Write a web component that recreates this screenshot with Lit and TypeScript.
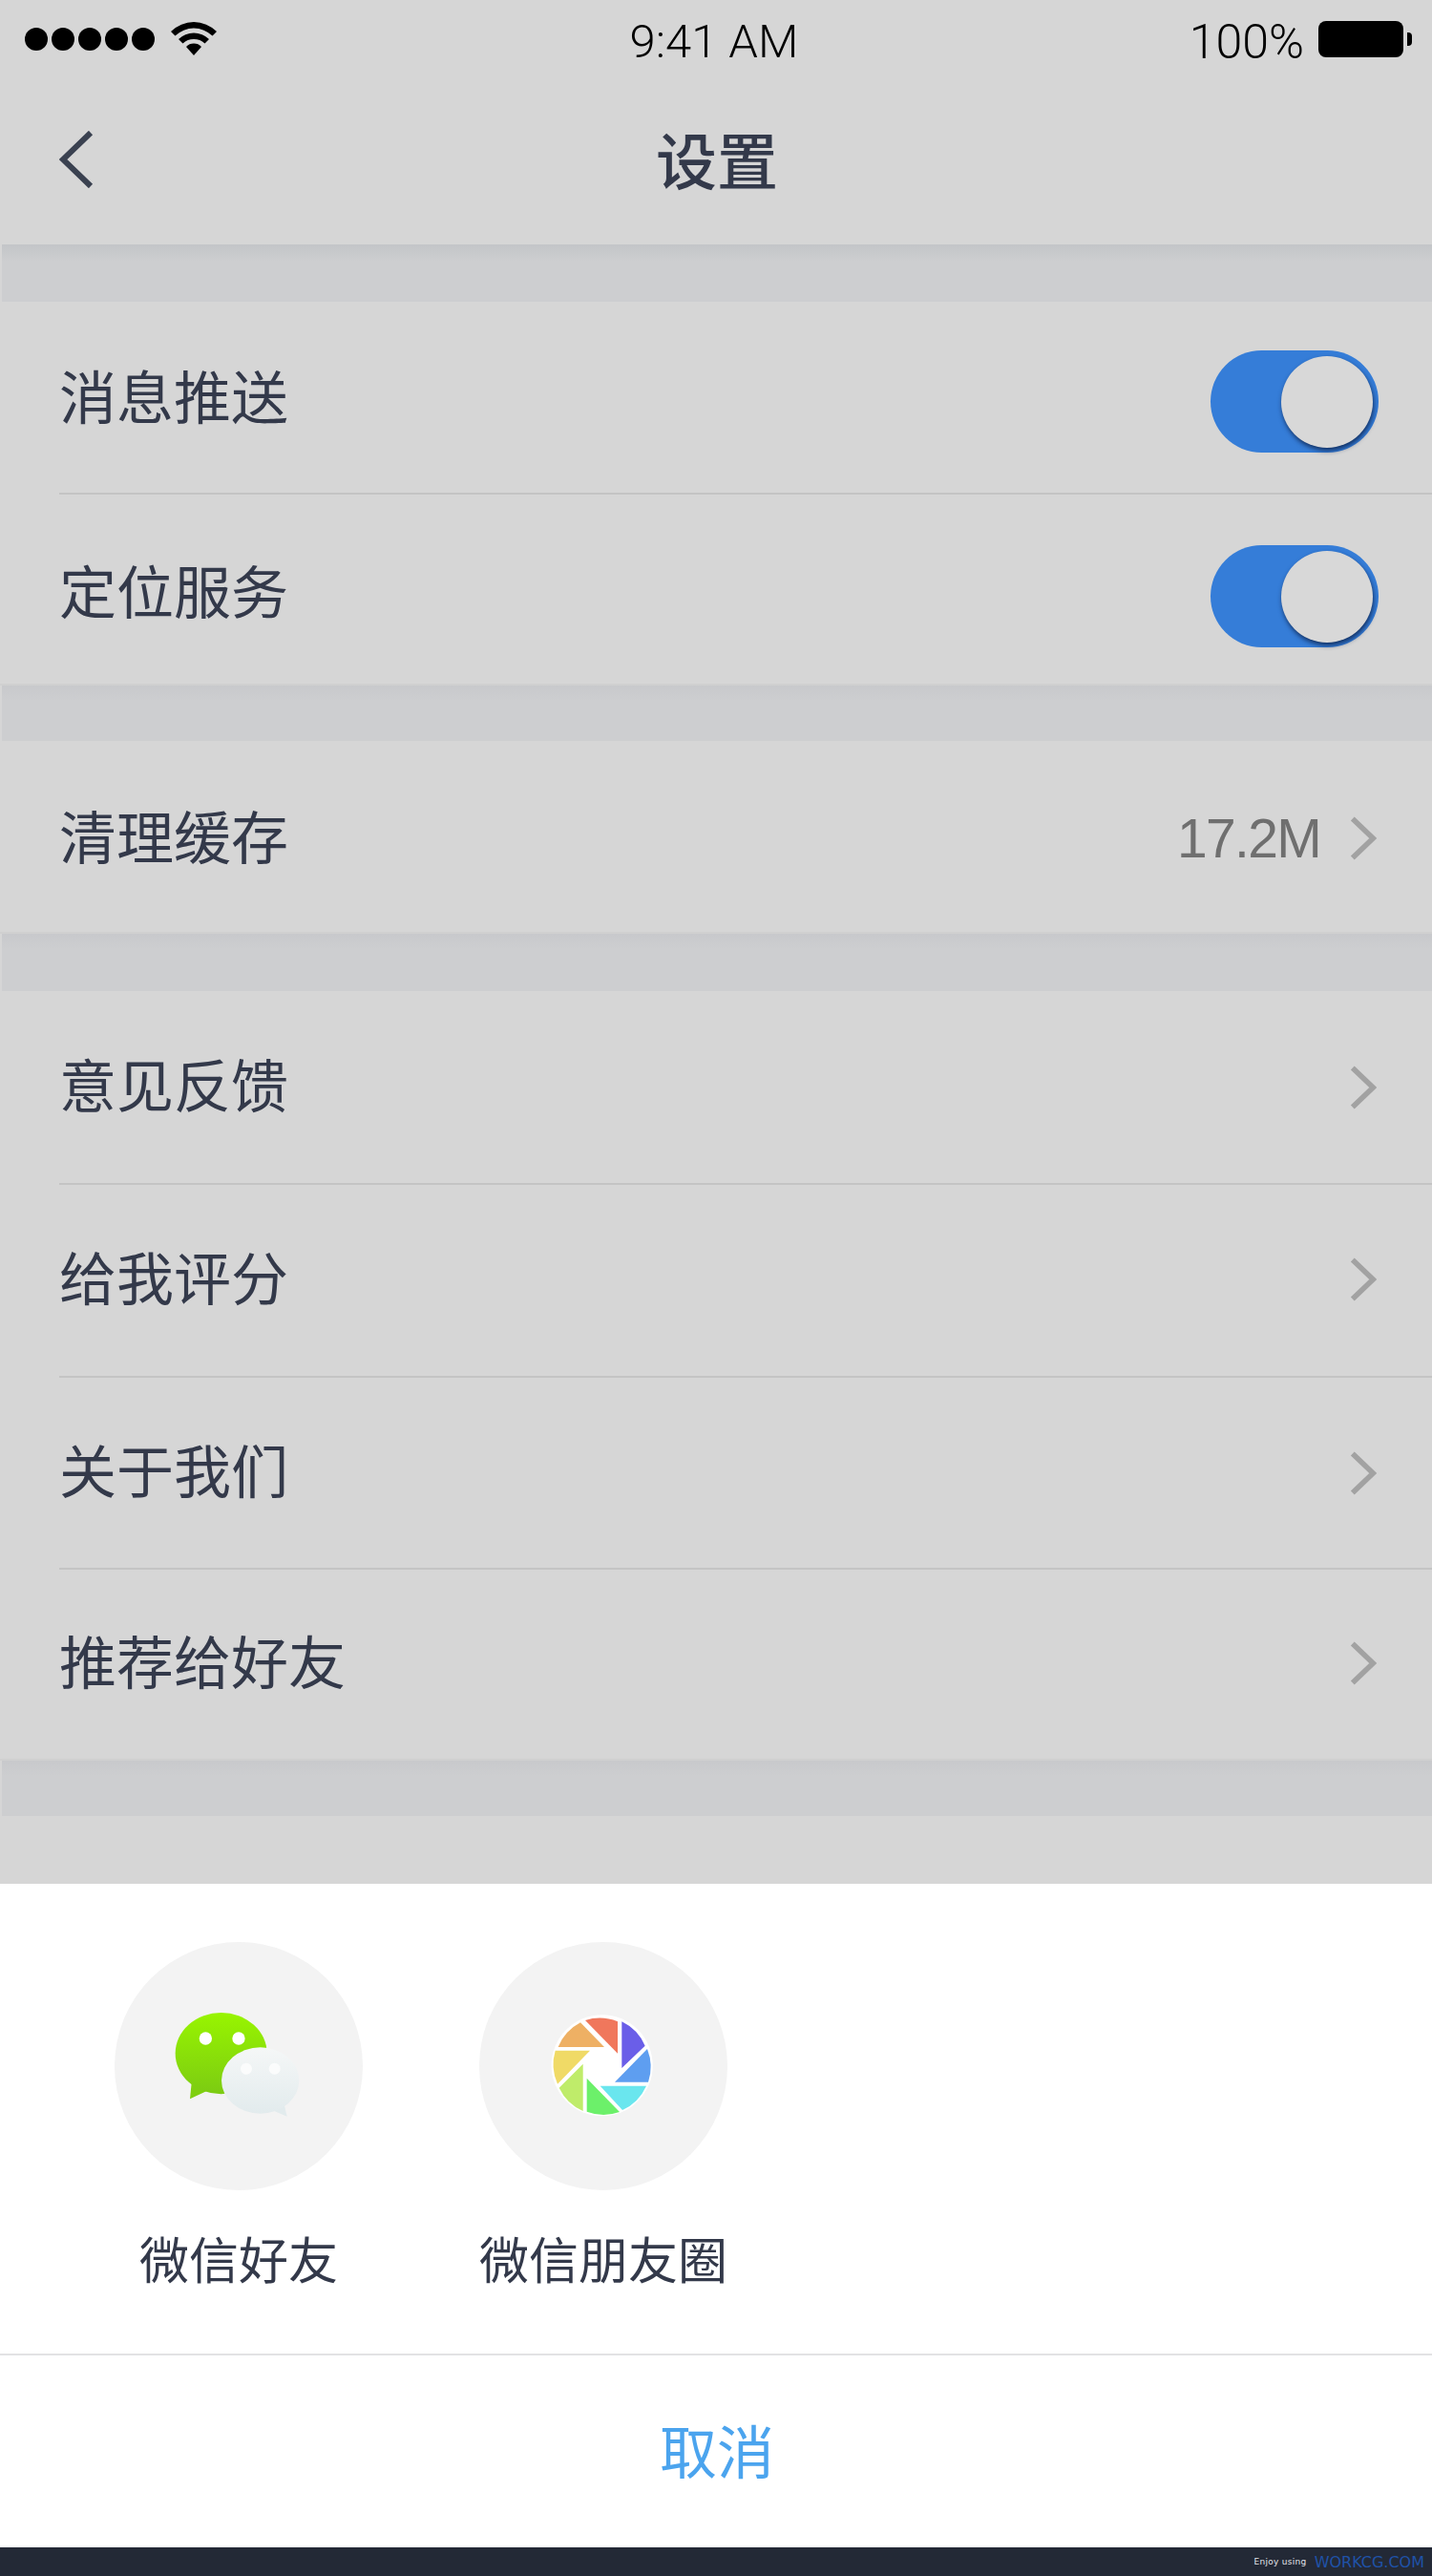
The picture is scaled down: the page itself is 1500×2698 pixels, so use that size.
import { LitElement, css, html, svg } from "lit";
import { customElement } from "lit/decorators.js";

type Row = { label: string; height: number; pad?: number; toggle?: boolean; value?: string };

const GROUPS: Row[][] = [
  [
    { label: "消息推送", height: 200, pad: 3, toggle: true },
    { label: "定位服务", height: 200, pad: 10, toggle: true },
  ],
  [{ label: "清理缓存", height: 200, pad: 4, value: "17.2M" }],
  [
    { label: "意见反馈", height: 201 },
    { label: "给我评分", height: 202 },
    { label: "关于我们", height: 201, pad: 2 },
    { label: "推荐给好友", height: 200 },
  ],
];

// aperture blades, in the coordinates of the 780px icon artwork
const BLADES: [string, string][] = [
  ["#f0775c", "M370 318A151 151 0 0 1 472 322V422Z"],
  ["#6a5ee8", "M485 322A151 151 0 0 1 558 398L485 468Z"],
  ["#5e9ef0", "M565 408A151 151 0 0 1 568 512H463Z"],
  ["#6ae6ee", "M562 524A151 151 0 0 1 487 600L417 524Z"],
  ["#6cf06a", "M478 606A151 151 0 0 1 375 605V500Z"],
  ["#bfec6a", "M363 603A151 151 0 0 1 288 530L363 455Z"],
  ["#f0da66", "M283 518A151 151 0 0 1 276 413H385Z"],
  ["#eeb064", "M285 402A151 151 0 0 1 355 325L430 402Z"],
];

const chevron = html`<svg class="chevron" viewBox="0 0 30 50">
  <path d="M3 3L26 25L3 47" fill="none" stroke="#a2a2a2" stroke-width="6" />
</svg>`;

const wechatIcon = html`<svg class="icon" viewBox="60 72 780 780">
  <defs>
    <linearGradient id="wg" x1="0" y1="0" x2="0" y2="1">
      <stop offset="0" stop-color="#98f500" />
      <stop offset="1" stop-color="#7ccb12" />
    </linearGradient>
    <linearGradient id="wb" x1="0" y1="0" x2="0" y2="1">
      <stop offset="0" stop-color="#f5f7f7" />
      <stop offset="1" stop-color="#e2ebed" />
    </linearGradient>
  </defs>
  <path d="M302 515L297 565L350 540Z" fill="#7fcf10" />
  <ellipse cx="395" cy="422" rx="144" ry="128" fill="url(#wg)" />
  <circle cx="346" cy="375" r="20" fill="#fff" />
  <circle cx="450" cy="375" r="20" fill="#fff" />
  <path d="M590 570L602 620L555 600Z" fill="#e2ebed" />
  <ellipse cx="518" cy="507" rx="122" ry="104" fill="url(#wb)" />
  <circle cx="474" cy="470" r="18" fill="#fbfcfc" />
  <circle cx="563" cy="470" r="18" fill="#fbfcfc" />
</svg>`;

const momentsIcon = html`<svg class="icon" viewBox="37 72 780 780">
  <circle cx="423" cy="460" r="159" fill="#fff" />
  ${BLADES.map(([color, d]) => svg`<path d=${d} fill=${color} />`)}
</svg>`;

@customElement("app-root")
export class AppRoot extends LitElement {
  static styles = css`
    :host {
      display: block;
      width: 1500px;
      height: 2698px;
      background: #d6d6d6;
      font-family: "Liberation Sans", "Noto Sans CJK SC", sans-serif;
      color: #33394a;
    }
    .status {
      height: 85px;
      box-sizing: border-box;
      padding: 22px 30px 0 26px;
      display: grid;
      grid-template-columns: 1fr auto 1fr;
      color: #000;
      font-family: "Roboto", sans-serif;
      font-weight: 300;
      font-size: 50px;
      line-height: 38px;
    }
    .status-left {
      display: flex;
      align-items: flex-start;
      gap: 17px;
    }
    .dots {
      display: flex;
      gap: 4px;
      margin-top: 7px;
    }
    .dot {
      width: 24px;
      height: 24px;
      border-radius: 50%;
      background: #000;
    }
    .wifi {
      width: 48px;
      height: 36px;
    }
    .status-time {
      font-size: 49px;
      padding-top: 3px;
    }
    .status-right {
      display: flex;
      justify-content: flex-end;
      align-items: flex-start;
      gap: 15px;
    }
    .status-right span {
      padding-top: 3px;
    }
    .battery {
      width: 89px;
      height: 38px;
      border-radius: 8px;
      background: #000;
      position: relative;
    }
    .battery::after {
      content: "";
      position: absolute;
      right: -9px;
      top: 12px;
      width: 5px;
      height: 14px;
      border-radius: 0 4px 4px 0;
      background: #000;
    }
    .nav {
      height: 171px;
      box-sizing: border-box;
      padding: 52px 0 0 62px;
      position: relative;
    }
    .back {
      display: block;
      width: 36px;
      height: 60px;
    }
    .title {
      position: absolute;
      left: 2px;
      right: 0;
      top: 46px;
      text-align: center;
      font-size: 64px;
      line-height: 80px;
      font-weight: 500;
    }
    .gap {
      height: 58px;
      margin-left: 2px;
      background: linear-gradient(#c8c9cc, #cdced0 16px);
    }
    .gap.tall {
      height: 60px;
    }
    .gap.first {
      background: linear-gradient(#c3c5c8, #cdced0 18px);
    }
    .group {
      border-bottom: 2px solid #d0d0d0;
    }
    .row {
      box-sizing: border-box;
      padding-left: 62px;
      padding-right: 58px;
      display: flex;
      align-items: center;
      justify-content: space-between;
      font-size: 60px;
      position: relative;
    }
    .row + .row::before {
      content: "";
      position: absolute;
      left: 62px;
      right: 0;
      top: 0;
      height: 2px;
      background: #c4c4c4;
    }
    .label {
      padding-bottom: 10px;
    }
    .row-end {
      display: flex;
      align-items: center;
      gap: 31px;
    }
    .value {
      font-size: 57px;
      letter-spacing: -1.7px;
      color: #6f6f6f;
    }
    .chevron {
      width: 28px;
      height: 48px;
    }
    .toggle {
      width: 176px;
      height: 107px;
      margin: 6px -2px 0 0;
      border-radius: 54px;
      background: #357dd8;
      position: relative;
    }
    .knob {
      position: absolute;
      left: 74px;
      top: 6px;
      width: 96px;
      height: 96px;
      border-radius: 50%;
      background: #d8d8d8;
      box-shadow: 1px 3px 5px rgba(10, 30, 70, 0.8);
    }
    .spacer {
      height: 71px;
    }
    .sheet {
      background: #fff;
    }
    .share {
      height: 492px;
      box-sizing: border-box;
      padding: 61px 0 0 120px;
      display: flex;
      gap: 122px;
    }
    .target {
      width: 260px;
      display: flex;
      flex-direction: column;
      align-items: center;
      font-size: 52px;
      line-height: 72px;
      white-space: nowrap;
    }
    .disc {
      width: 260px;
      height: 260px;
      margin-bottom: 39px;
      border-radius: 50%;
      background: #f3f3f3;
    }
    .icon {
      display: block;
      width: 260px;
      height: 260px;
    }
    .cancel {
      height: 203px;
      box-sizing: border-box;
      padding: 0 0 6px 2px;
      border-top: 2px solid #e2e2e4;
      display: flex;
      align-items: center;
      justify-content: center;
      font-size: 60px;
      color: #4ba4ee;
    }
    .footer {
      height: 30px;
      box-sizing: border-box;
      padding-right: 8px;
      background: #232936;
      display: flex;
      align-items: center;
      justify-content: flex-end;
      gap: 8px;
      font-family: "DejaVu Sans", sans-serif;
      white-space: nowrap;
    }
    .enjoy {
      font-size: 9px;
      letter-spacing: 0.3px;
      color: #e4e6ea;
    }
    .brand {
      font-size: 16px;
      color: #1f52a8;
    }
  `;

  private renderRow(row: Row) {
    return html`<div class="row" style="height:${row.height}px;padding-top:${row.pad ?? 0}px">
      <span class="label">${row.label}</span>
      ${row.toggle
        ? html`<div class="toggle"><div class="knob"></div></div>`
        : html`<div class="row-end">
            ${row.value ? html`<span class="value">${row.value}</span>` : ""}
            ${chevron}
          </div>`}
    </div>`;
  }

  render() {
    return html`
      <div class="status">
        <div class="status-left">
          <div class="dots">
            ${[0, 1, 2, 3, 4].map(() => html`<div class="dot"></div>`)}
          </div>
          <svg class="wifi" viewBox="0 0 48 36">
            <path d="M0 11A34 34 0 0 1 48 11L43.500 15.500A28 28 0 0 0 4.500 15.500Z" />
            <path d="M8 19A23 23 0 0 1 40 19L35.500 23.500A17 17 0 0 0 12.500 23.500Z" />
            <path d="M16 27A11 11 0 0 1 32 27L24 36Z" />
          </svg>
        </div>
        <div class="status-time">9:41 AM</div>
        <div class="status-right">
          <span>100%</span>
          <div class="battery"></div>
        </div>
      </div>
      <div class="nav">
        <svg class="back" viewBox="0 0 36 60">
          <path d="M33 2L4 30L33 58" fill="none" stroke="#3a4150" stroke-width="6" />
        </svg>
        <div class="title">设置</div>
      </div>
      <div class="gap first tall"></div>
      <div class="group">${GROUPS[0].map((r) => this.renderRow(r))}</div>
      <div class="gap"></div>
      <div class="group">${GROUPS[1].map((r) => this.renderRow(r))}</div>
      <div class="gap tall"></div>
      <div class="group">${GROUPS[2].map((r) => this.renderRow(r))}</div>
      <div class="gap"></div>
      <div class="spacer"></div>
      <div class="sheet">
        <div class="share">
          <div class="target">
            <div class="disc">${wechatIcon}</div>
            微信好友
          </div>
          <div class="target">
            <div class="disc">${momentsIcon}</div>
            微信朋友圈
          </div>
        </div>
        <div class="cancel">取消</div>
      </div>
      <div class="footer">
        <span class="enjoy">Enjoy using</span>
        <span class="brand">WORKCG.COM</span>
      </div>
    `;
  }
}
